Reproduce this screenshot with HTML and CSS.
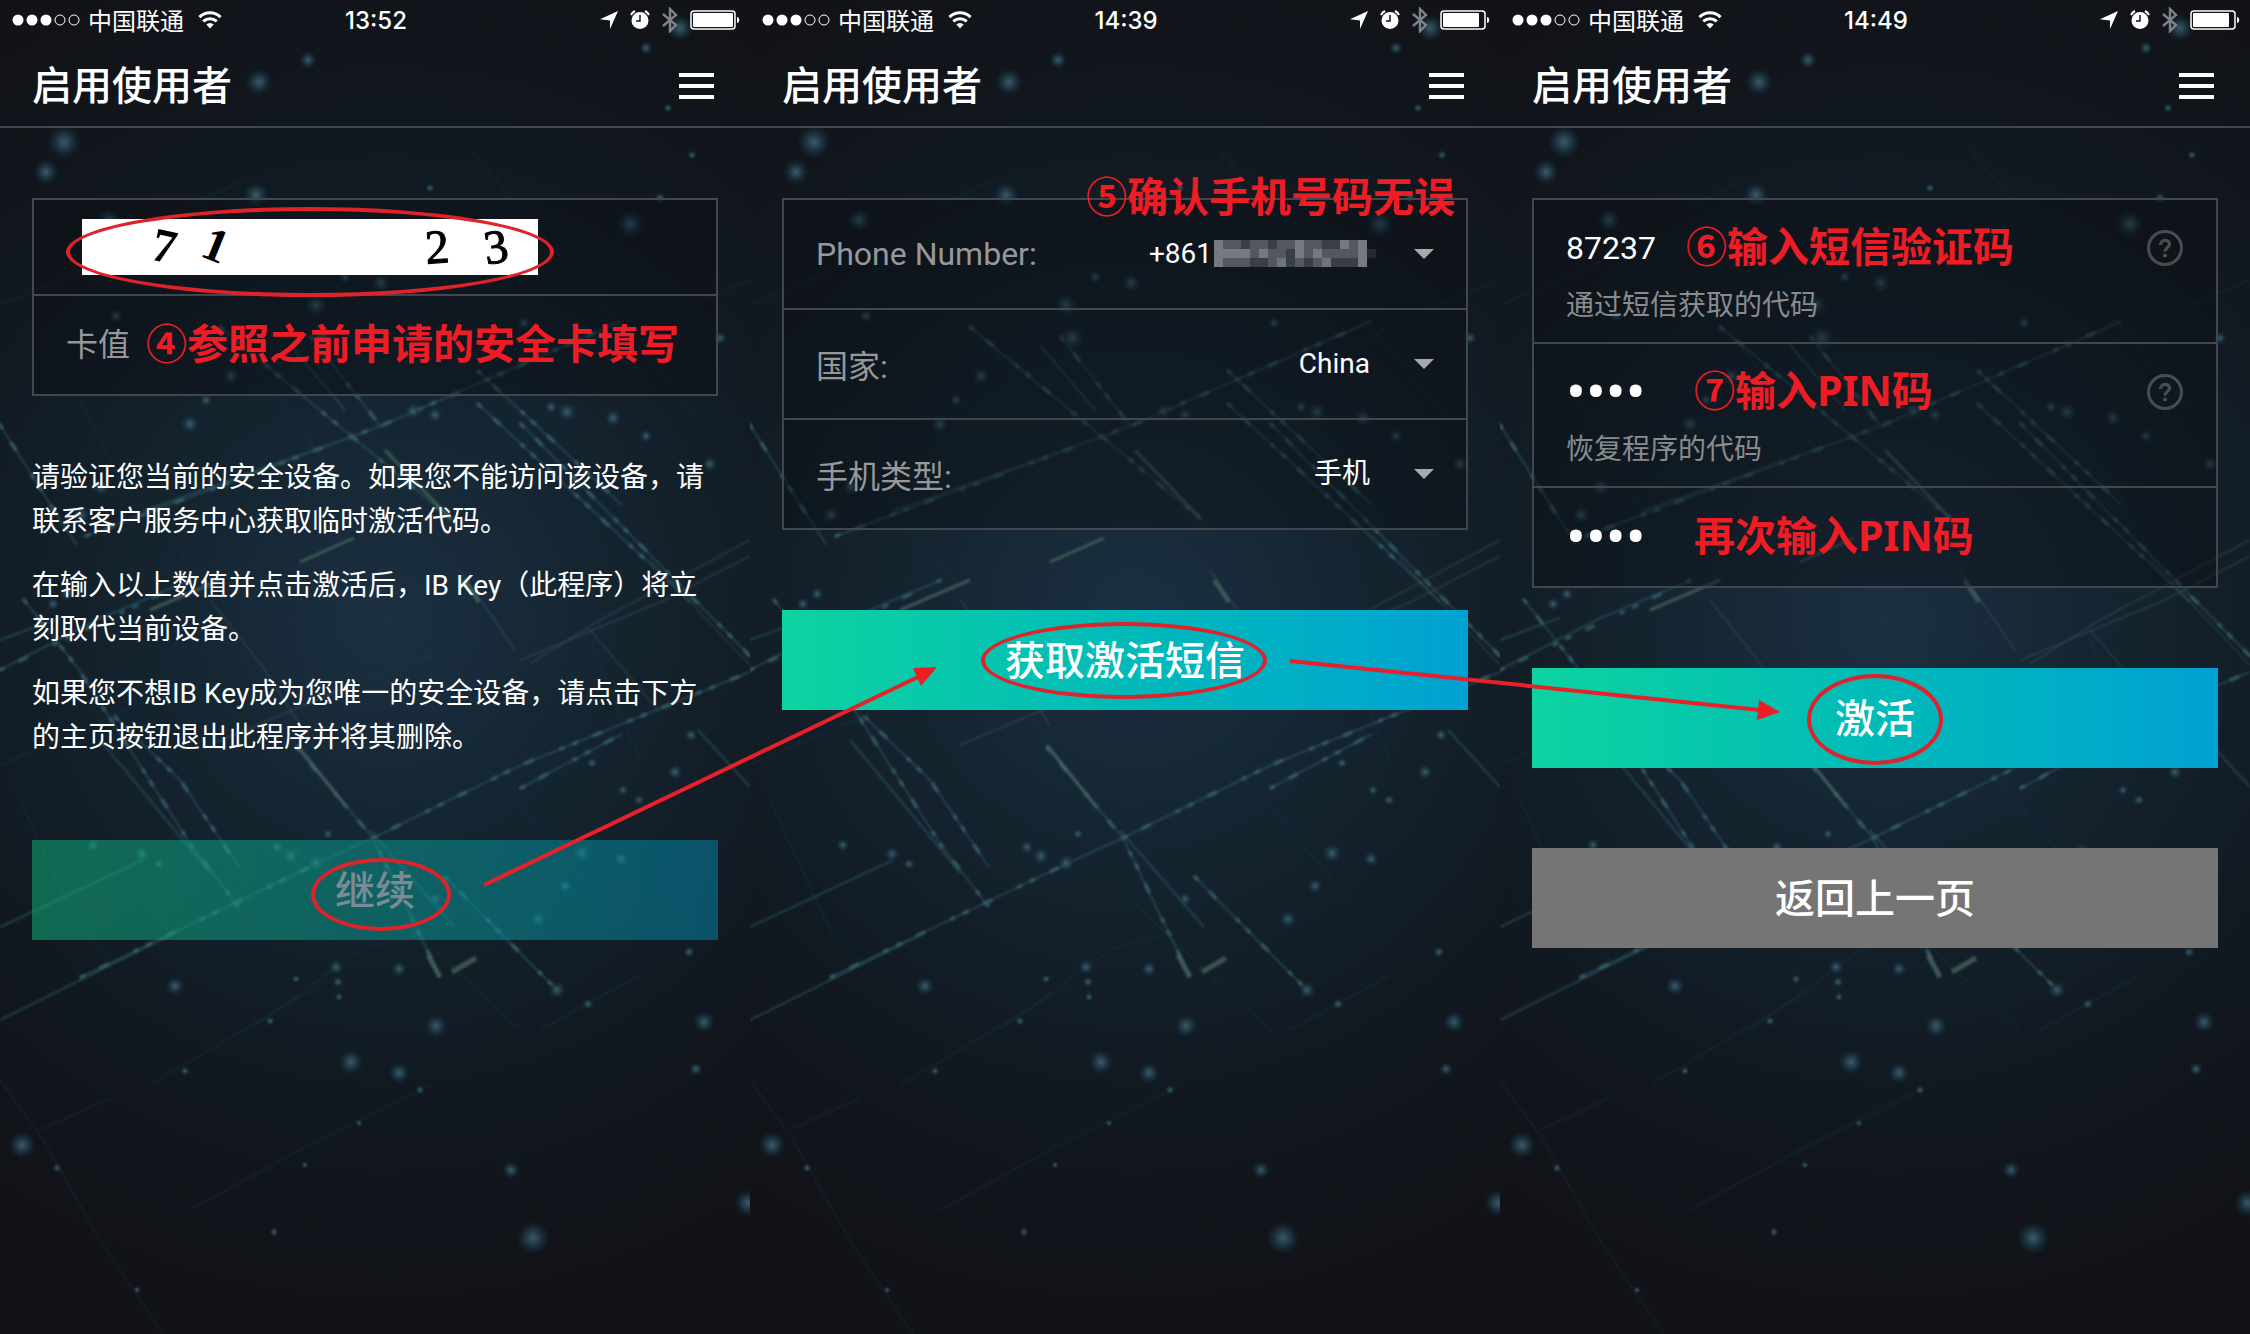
FILE: index.html
```html
<!DOCTYPE html>
<html lang="zh-CN">
<head>
    <meta charset="UTF-8">
    <meta name="viewport" content="width=device-width, initial-scale=1.0">
    <title>启用使用者</title>
    <link rel="stylesheet" href="styles.css">
</head>
<body>

    <!-- shared icons and backdrop -->
    <svg class="defs" aria-hidden="true">
        <symbol id="signal" viewBox="0 0 70 12">
            <g fill="#fff">
                <circle cx="6" cy="6" r="5.5"/><circle cx="20" cy="6" r="5.5"/><circle cx="34" cy="6" r="5.5"/>
            </g>
            <g fill="none" stroke="#fff">
                <circle cx="48" cy="6" r="5"/><circle cx="62" cy="6" r="5"/>
            </g>
        </symbol>
        <symbol id="wifi" viewBox="0 0 24 18">
            <path d="M12 17.5l-3.7-4a5.3 5.3 0 0 1 7.4 0z" fill="#fff"/>
            <path d="M5.3 10.3a9.8 9.8 0 0 1 13.4 0M1.4 6.1a15.2 15.2 0 0 1 21.2 0" fill="none" stroke="#fff" stroke-width="3"/>
        </symbol>
        <symbol id="location" viewBox="0 0 18 18">
            <path d="M18 0L10 18V9.5L0 8.2z" fill="#fff"/>
        </symbol>
        <symbol id="alarm" viewBox="0 0 20 20">
            <circle cx="10" cy="10.5" r="8.5" fill="#fff"/>
            <path d="M1 5a9 9 0 0 1 4-4M19 5a9 9 0 0 0-4-4" fill="none" stroke="#fff" stroke-width="2"/>
            <path d="M10 5v6H6" fill="none" stroke="#11161d" stroke-width="1.5"/>
        </symbol>
        <symbol id="bluetooth" viewBox="0 0 16 26">
            <path d="M1 7l13 11-6 6V2l6 6L1 19" fill="none" stroke="#7d8389" stroke-width="2.4"/>
        </symbol>
        <symbol id="battery" viewBox="0 0 50 20">
            <rect x="1" y="1" width="44" height="18" rx="3" fill="none" stroke="#fff" stroke-width="1.5"/>
            <path d="M47 7c3 0 3 6 0 6z" fill="#fff"/>
        </symbol>
        <symbol id="menu" viewBox="0 0 36 26">
            <path d="M0 2h35M0 13h35M0 24h35" stroke="#fff" stroke-width="4"/>
        </symbol>
        <symbol id="help" viewBox="0 0 38 38">
            <circle cx="19" cy="19" r="16.5" fill="none" stroke="#4a4c4f" stroke-width="3"/>
            <path d="M14.5 16c0-6 9-6 9-.8 0 3.3-4.5 3.6-4.5 7.3" fill="none" stroke="#4a4c4f" stroke-width="3.2"/>
            <circle cx="19" cy="26.5" r="2.1" fill="#4a4c4f"/>
        </symbol>
        <symbol id="caret" viewBox="0 0 20 10">
            <path d="M0 0h20L10 10z" fill="#a6a8aa"/>
        </symbol>

        <radialGradient id="glow" gradientUnits="userSpaceOnUse" cx="385" cy="620" r="680">
            <stop offset="0" stop-color="#1c3042"/>
            <stop offset=".35" stop-color="#14242f"/>
            <stop offset=".72" stop-color="#11181f"/>
            <stop offset="1" stop-color="#111318"/>
        </radialGradient>
        <radialGradient id="spark">
            <stop offset="0" stop-color="#4a6a70"/>
            <stop offset=".35" stop-color="#28495a"/>
            <stop offset="1" stop-color="#14303f" stop-opacity="0"/>
        </radialGradient>
        <filter id="soft"><feGaussianBlur stdDeviation="0.8"/></filter>

        <symbol id="space" viewBox="0 0 750 1334" preserveAspectRatio="xMidYMin slice">
            <rect width="750" height="1334" fill="url(#glow)"/>
            <g fill="none" filter="url(#soft)">
                <g stroke="#2b5460" stroke-width="2" opacity=".65">
                    <path d="M220 327L450 518M290 345L345 410M311 337L382 428"/>
                    <path d="M478 371L622 505M478 404L646 560L690 602M521 424L750 656"/>
                    <path d="M0 425L60 520L77 545M24 600L77 667L191 845L239 907"/>
                    <path d="M86 536L383 425L622 321M143 511L365 432"/>
                    <path d="M115 717L180 780L239 867M100 740L150 800L210 873"/>
                    <path d="M373 838L521 765L750 672M521 788L622 734M335 855L373 838"/>
                    <path d="M81 977L335 855M0 1020L167 937M0 927L143 860"/>
                    <path d="M0 670L96 620L191 580M0 640L60 618M698 730L750 787"/>
                    <path d="M297 748L373 838L440 977M370 830L454 927M445 877L517 950L557 990"/>
                </g>
                <!-- broken beads of light along the same rays -->
                <g stroke="#3f6c74" stroke-width="4" stroke-dasharray="3 19 7 31 2 12" stroke-linecap="round" opacity=".6">
                    <path d="M220 327L450 518M311 337L382 428M478 371L622 505M478 404L646 560M521 424L750 656"/>
                    <path d="M0 425L60 520M24 600L77 667L191 845L239 907M86 536L383 425L622 321"/>
                    <path d="M115 717L180 780L239 867M373 838L521 765L750 672M521 788L622 734"/>
                    <path d="M81 977L335 855M0 670L191 580M297 748L373 838L440 977M445 877L557 990"/>
                </g>
                <g stroke="#4d6b62" stroke-width="3" opacity=".7">
                    <path d="M385 450L450 518M150 610L220 580M297 745L345 805M300 562L354 538"/>
                    <path d="M428 955L440 977M452 972L476 958" stroke-width="5"/>
                    <path d="M464 580L479 602" stroke-width="4"/>
                </g>
                <g stroke="#466268" opacity=".7">
                    <path d="M210 600L263 667L300 725M460 570L515 650M521 660L665 600L750 556M530 664L600 620L750 540"/>
                    <path d="M650 560L750 665M590 630L660 712M210 745L340 690"/>
                </g>
                <g stroke="#1e4353" opacity=".6">
                    <path d="M120 248L140 280M190 205L240 182M470 150L700 420M560 365L690 305L750 280"/>
                    <path d="M20 800L80 930L110 960M0 765L150 700M240 345L330 470M0 305L100 262"/>
                    <path d="M250 1030L360 950L430 930M150 1085L320 985M370 890L520 1030M590 640L640 760"/>
                    <path d="M400 600L480 760L600 900M330 690L480 640M540 1030L640 975M60 360L120 480L230 610"/>
                    <path d="M0 1080L43 1140L100 1240L163 1334M40 1130L110 1098M190 1210L300 1150L430 1085"/>
                </g>
            </g>
            <g fill="url(#spark)" opacity=".8">
                <circle cx="64" cy="142" r="17"/><circle cx="46" cy="172" r="13"/><circle cx="259" cy="82" r="14"/>
                <circle cx="308" cy="60" r="9"/><circle cx="256" cy="195" r="13"/><circle cx="109" cy="220" r="12"/>
                <circle cx="630" cy="224" r="14"/><circle cx="316" cy="305" r="12"/><circle cx="381" cy="283" r="10"/>
                <circle cx="345" cy="277" r="7"/><circle cx="231" cy="376" r="9"/><circle cx="116" cy="316" r="7"/>
                <circle cx="190" cy="424" r="10"/><circle cx="413" cy="411" r="9"/><circle cx="435" cy="415" r="8"/>
                <circle cx="567" cy="412" r="10"/><circle cx="613" cy="418" r="9"/><circle cx="551" cy="407" r="7"/>
                <circle cx="524" cy="323" r="7"/><circle cx="720" cy="338" r="7"/><circle cx="710" cy="464" r="8"/>
                <circle cx="101" cy="487" r="9"/><circle cx="81" cy="515" r="9"/><circle cx="206" cy="400" r="7"/>
                <circle cx="646" cy="436" r="7"/><circle cx="692" cy="155" r="5"/><circle cx="660" cy="198" r="6"/>
                <circle cx="680" cy="28" r="14"/><circle cx="646" cy="48" r="7"/><circle cx="668" cy="108" r="5"/>
                <circle cx="430" cy="188" r="5"/><circle cx="322" cy="338" r="13"/><circle cx="67" cy="594" r="7"/>
                <circle cx="53" cy="604" r="7"/><circle cx="93" cy="845" r="7"/><circle cx="142" cy="854" r="8"/>
                <circle cx="159" cy="864" r="6"/><circle cx="277" cy="847" r="7"/><circle cx="291" cy="856" r="9"/>
                <circle cx="316" cy="863" r="9"/><circle cx="582" cy="853" r="10"/><circle cx="538" cy="919" r="9"/>
                <circle cx="565" cy="886" r="8"/><circle cx="621" cy="859" r="8"/><circle cx="592" cy="763" r="6"/>
                <circle cx="675" cy="772" r="8"/><circle cx="691" cy="735" r="7"/><circle cx="623" cy="790" r="6"/>
                <circle cx="639" cy="800" r="6"/><circle cx="435" cy="899" r="7"/><circle cx="328" cy="834" r="6"/>
                <circle cx="336" cy="967" r="8"/><circle cx="399" cy="969" r="8"/><circle cx="175" cy="986" r="10"/>
                <circle cx="338" cy="982" r="6"/><circle cx="296" cy="979" r="5"/><circle cx="339" cy="997" r="5"/>
                <circle cx="557" cy="990" r="9"/><circle cx="588" cy="1004" r="6"/><circle cx="689" cy="952" r="6"/>
                <circle cx="436" cy="1026" r="12"/><circle cx="351" cy="1062" r="13"/><circle cx="399" cy="1073" r="11"/>
                <circle cx="704" cy="1022" r="11"/><circle cx="696" cy="1069" r="7"/><circle cx="270" cy="1021" r="5"/>
                <circle cx="185" cy="1071" r="5"/><circle cx="22" cy="1145" r="14"/><circle cx="359" cy="1123" r="4"/>
                <circle cx="305" cy="1165" r="4"/><circle cx="511" cy="1170" r="9"/><circle cx="533" cy="1238" r="17"/>
                <circle cx="748" cy="1203" r="14"/><circle cx="274" cy="1232" r="5"/><circle cx="57" cy="1168" r="5"/>
                <circle cx="137" cy="1290" r="4"/><circle cx="420" cy="1090" r="5"/>
            </g>
        </symbol>
    </svg>

    <main class="board">

        <section class="phone">
            <svg class="backdrop" aria-hidden="true"><use href="#space"/></svg>
            <div class="status">
                <div class="status-left">
                    <svg class="i-signal"><use href="#signal"/></svg>
                    <span>中国联通</span>
                    <svg class="i-wifi"><use href="#wifi"/></svg>
                </div>
                <time>13:52</time>
                <div class="status-right">
                    <svg class="i-location"><use href="#location"/></svg>
                    <svg class="i-alarm"><use href="#alarm"/></svg>
                    <svg class="i-bluetooth"><use href="#bluetooth"/></svg>
                    <svg class="i-battery"><use href="#battery"/><rect x="3" y="3" width="40" height="14" rx="1" fill="#fff"/></svg>
                </div>
            </div>
            <header class="title-bar">
                <h1>启用使用者</h1>
                <button class="menu" aria-label="菜单"><svg><use href="#menu"/></svg></button>
            </header>
            <div class="content">
                <div class="card">
                    <div class="row row-captcha">
                        <div class="captcha ring">
                            <svg viewBox="0 0 456 56">
                                <g class="captcha-digits">
                                    <text x="82" y="43" font-weight="bold" transform="rotate(12 82 28)">7</text>
                                    <text x="133" y="42" font-weight="bold" transform="rotate(22 133 28)">1</text>
                                    <text x="355" y="44" transform="rotate(-4 355 28)" stroke="#000">2</text>
                                    <text x="414" y="44" transform="rotate(-8 414 28)" stroke="#000">3</text>
                                </g>
                            </svg>
                        </div>
                    </div>
                    <div class="row row-short">
                        <input class="card-value" type="text" placeholder="卡值" aria-label="卡值">
                        <strong class="note">④参照之前申请的安全卡填写</strong>
                    </div>
                </div>
                <div class="text">
                    <p>请验证您当前的安全设备。如果您不能访问该设备，请联系客户服务中心获取临时激活代码。</p>
                    <p>在输入以上数值并点击激活后，IB Key（此程序）将立刻取代当前设备。</p>
                    <p>如果您不想IB Key成为您唯一的安全设备，请点击下方的主页按钮退出此程序并将其删除。</p>
                </div>
                <button class="btn btn-off"><span class="ring ring-continue">继续</span></button>
            </div>
        </section>

        <section class="phone">
            <svg class="backdrop" aria-hidden="true"><use href="#space"/></svg>
            <div class="status">
                <div class="status-left">
                    <svg class="i-signal"><use href="#signal"/></svg>
                    <span>中国联通</span>
                    <svg class="i-wifi"><use href="#wifi"/></svg>
                </div>
                <time>14:39</time>
                <div class="status-right">
                    <svg class="i-location"><use href="#location"/></svg>
                    <svg class="i-alarm"><use href="#alarm"/></svg>
                    <svg class="i-bluetooth"><use href="#bluetooth"/></svg>
                    <svg class="i-battery"><use href="#battery"/><rect x="3" y="3" width="36" height="14" rx="1" fill="#fff"/></svg>
                </div>
            </div>
            <header class="title-bar">
                <h1>启用使用者</h1>
                <button class="menu" aria-label="菜单"><svg><use href="#menu"/></svg></button>
            </header>
            <div class="content">
                <div class="card">
                    <strong class="note note-over">⑤确认手机号码无误</strong>
                    <div class="row">
                        <label for="phone">Phone Number:</label>
                        <select id="phone"><option>+861</option></select>
                        <svg class="mosaic" viewBox="0 0 162 28" aria-hidden="true">
                            <rect width="153" height="27" fill="#55575e"/>
                            <g fill="#777980">
                                <path d="M0 0h9v27H0zM18 9h18v9H18zM45 9h9v9h-9zM81 0h9v18h-9zM99 9h9v9h-9zM126 0h9v9h-9zM144 0h9v27h-9zM9 9h9v9H9z"/>
                            </g>
                            <g fill="#3b3e46">
                                <path d="M27 0h9v9h-9zM54 0h9v9h-9zM72 9h9v18h-9zM90 18h9v9h-9zM108 0h18v9h-18zM36 18h18v9H36zM117 18h27v9h-27z"/>
                            </g>
                            <path d="M63 18h9v9h-9zM108 18h9v9h-9z" fill="#6a7580"/>
                            <path d="M153 9h9v9h-9z" fill="#25282f"/>
                        </svg>
                        <svg class="caret"><use href="#caret"/></svg>
                    </div>
                    <div class="row">
                        <label for="country">国家:</label>
                        <select id="country"><option>China</option></select>
                        <svg class="caret"><use href="#caret"/></svg>
                    </div>
                    <div class="row">
                        <label for="kind">手机类型:</label>
                        <select id="kind"><option>手机</option></select>
                        <svg class="caret"><use href="#caret"/></svg>
                    </div>
                </div>
                <button class="btn btn-next"><span class="ring ring-sms">获取激活短信</span></button>
            </div>
        </section>

        <section class="phone">
            <svg class="backdrop" aria-hidden="true"><use href="#space"/></svg>
            <div class="status">
                <div class="status-left">
                    <svg class="i-signal"><use href="#signal"/></svg>
                    <span>中国联通</span>
                    <svg class="i-wifi"><use href="#wifi"/></svg>
                </div>
                <time>14:49</time>
                <div class="status-right">
                    <svg class="i-location"><use href="#location"/></svg>
                    <svg class="i-alarm"><use href="#alarm"/></svg>
                    <svg class="i-bluetooth"><use href="#bluetooth"/></svg>
                    <svg class="i-battery"><use href="#battery"/><rect x="3" y="3" width="36" height="14" rx="1" fill="#fff"/></svg>
                </div>
            </div>
            <header class="title-bar">
                <h1>启用使用者</h1>
                <button class="menu" aria-label="菜单"><svg><use href="#menu"/></svg></button>
            </header>
            <div class="content">
                <div class="card">
                    <div class="row row-code">
                        <div class="code-line">
                            <input id="sms" class="code" type="text" value="87237">
                            <strong class="note">⑥输入短信验证码</strong>
                            <button class="help" aria-label="帮助"><svg><use href="#help"/></svg></button>
                        </div>
                        <label class="hint" for="sms">通过短信获取的代码</label>
                    </div>
                    <div class="row row-code">
                        <div class="code-line">
                            <input id="pin" class="code pin" type="password" value="0000">
                            <strong class="note">⑦输入PIN码</strong>
                            <button class="help" aria-label="帮助"><svg><use href="#help"/></svg></button>
                        </div>
                        <label class="hint" for="pin">恢复程序的代码</label>
                    </div>
                    <div class="row row-short">
                        <input class="code pin" type="password" value="0000" aria-label="再次输入PIN码">
                        <strong class="note">再次输入PIN码</strong>
                    </div>
                </div>
                <button class="btn btn-next"><span class="ring ring-activate">激活</span></button>
                <button class="btn btn-back btn-next">返回上一页</button>
            </div>
        </section>

        <!-- arrows from one step to the next -->
        <svg class="arrows" viewBox="0 0 2250 1334" preserveAspectRatio="none" aria-hidden="true">
            <g stroke="#e8202a" stroke-width="4">
                <path d="M484 885L918 677"/>
                <path d="M1290 661L1760 710"/>
            </g>
            <g fill="#ee1c25">
                <path d="M937 667L913 668L921 686z"/>
                <path d="M1780 712L1759 700L1757 720z"/>
            </g>
        </svg>
    </main>

</body>
</html>
```
FILE: styles.css
```css
* {
    box-sizing: border-box;
}
body {
    margin: 0;
    background-color: #111318;
    color: #fff;
    font-family: Roboto, "Noto Sans CJK SC", sans-serif;
    font-size: 28px;
}
button, input, select {
    font: inherit;
    color: inherit;
    background: none;
    border: 0;
    padding: 0;
    margin: 0;
}
button {
    cursor: pointer;
}
svg {
    display: block;
}
.defs {
    position: absolute;
    width: 0;
    height: 0;
}
.board {
    position: relative;
    display: grid;
    grid-template-columns: repeat(3, 1fr);
    min-height: 100vh;
}
.phone {
    position: relative;
    overflow: hidden;
}
.backdrop {
    position: absolute;
    top: 0;
    left: 0;
    z-index: -1;
    width: 100%;
    height: 100%;
}

/* status bar */
.status {
    display: grid;
    grid-template-columns: 1fr auto 1fr;
    align-items: center;
    height: 40px;
    padding: 0 10px 0 12px;
    font-size: 24px;
}
.status-left, .status-right {
    display: flex;
    align-items: center;
}
.status-left span {
    margin: 0 14px 0 6px;
    padding-bottom: 2px;
}
.status-right {
    justify-content: flex-end;
    gap: 12px;
}
.status time {
    font-family: Inter, sans-serif;
    font-weight: 500;
}
.i-signal {
    width: 70px;
    height: 12px;
}
.i-wifi {
    width: 24px;
    height: 18px;
}
.i-location {
    width: 18px;
    height: 18px;
}
.i-alarm {
    width: 20px;
    height: 20px;
}
.i-bluetooth {
    width: 16px;
    height: 26px;
}
.i-battery {
    width: 50px;
    height: 20px;
}

/* title */
.title-bar {
    display: flex;
    justify-content: space-between;
    align-items: center;
    height: 88px;
    padding: 0 35px 0 32px;
    border-bottom: 2px solid #43474d;
}
.title-bar h1 {
    margin: 0;
    font-size: 40px;
    font-weight: 500;
}
.menu {
    padding-top: 6px;
}
.menu svg {
    width: 36px;
    height: 26px;
}

.content {
    padding: 70px 32px 32px;
}
.card {
    position: relative;
    border: 2px solid #43474d;
    background-color: rgba(10, 12, 18, 0.4);
}
.row {
    display: flex;
    align-items: center;
    min-height: 108px;
    padding: 0 32px;
}
.row + .row {
    min-height: 110px;
    border-top: 2px solid #43474d;
}
.row label {
    color: #96989b;
    font-size: 32px;
}
.row-captcha {
    min-height: 94px;
    padding-left: 48px;
}
.row + .row-short {
    min-height: 100px;
}
.captcha {
    width: 456px;
    background-color: #fff;
}
.captcha svg {
    overflow: visible;
}
.captcha-digits {
    font-family: "Liberation Serif", serif;
    font-size: 48px;
    text-anchor: middle;
}
.card-value {
    width: 80px;
    font-size: 32px;
}
.card-value::placeholder {
    color: #96989b;
    opacity: 1;
}
.note {
    padding-bottom: 4px;
    color: #ee1c25;
    font-family: "Noto Sans", "Noto Sans CJK SC", sans-serif;
    font-size: 41px;
    font-weight: 700;
    line-height: 44px;
    white-space: nowrap;
}
.note-over {
    position: absolute;
    top: -26px;
    right: 11px;
}

/* drop-downs */
.row select {
    flex: 1;
    appearance: none;
    padding-bottom: 2px;
    text-align: right;
    text-align-last: right;
}
.caret {
    width: 20px;
    height: 10px;
    margin-left: 44px;
}
.mosaic {
    width: 162px;
    height: 28px;
    margin-left: 2px;
}
.mosaic + .caret {
    margin-left: 38px;
}

/* code fields */
.row-code {
    flex-direction: column;
    align-items: stretch;
    padding-top: 28px;
    padding-bottom: 14px;
}
.code-line {
    display: flex;
    align-items: center;
    height: 40px;
}
.code {
    width: 120px;
    font-size: 32px;
}
.pin {
    width: 128px;
    height: 40px;
    font-size: 59px;
}
.help {
    margin-left: auto;
}
.help svg {
    width: 38px;
    height: 38px;
}
.row .hint {
    margin-top: 16px;
    font-size: 28px;
    line-height: 44px;
    color: #898b8e;
}

.text {
    margin: 60px 0 80px;
}
.text p {
    margin: 0 0 20px;
    line-height: 44px;
}

/* buttons */
.btn {
    display: block;
    width: 100%;
    height: 100px;
    padding-bottom: 4px;
    font-size: 40px;
    font-weight: 500;
    background: linear-gradient(to right, #0dd3a0, #00b8bb 55%, #00a2d2);
}
.btn-off {
    color: #7b8b95;
    background: linear-gradient(to right, rgba(18, 183, 128, 0.5), rgba(2, 138, 176, 0.5));
}
.btn-next {
    margin-top: 80px;
}
.btn-back {
    background: #757575;
}

/* red ovals drawn round the important bits */
.ring {
    position: relative;
}
.ring::after {
    content: "";
    position: absolute;
    inset: -12px -16px -22px;
    border: 4px solid #e0222b;
    border-radius: 50%;
}
.ring-continue::after {
    inset: -10px -36px -16px -24px;
}
.ring-sms::after {
    inset: -16px -22px -14px -24px;
}
.ring-activate::after {
    inset: -22px -28px;
}
.arrows {
    position: absolute;
    top: 0;
    left: 0;
    width: 100%;
    height: 100%;
    pointer-events: none;
}
```
